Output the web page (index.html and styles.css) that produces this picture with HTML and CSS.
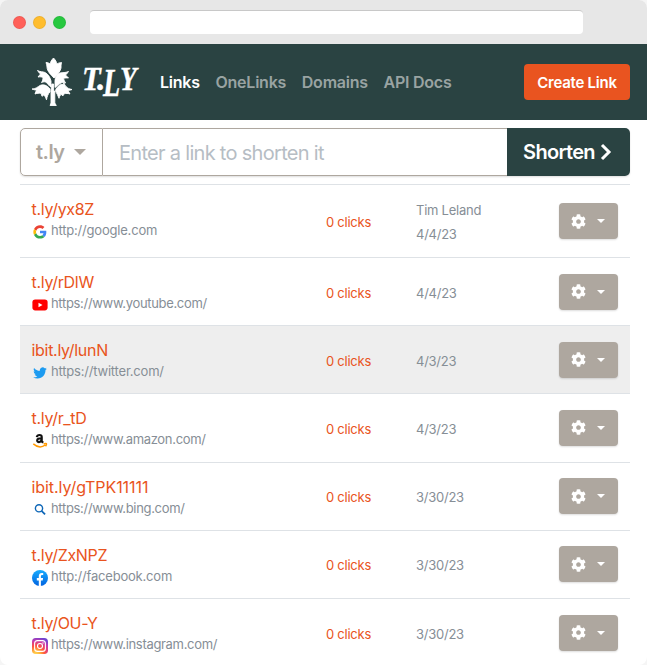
FILE: index.html
```html
<!DOCTYPE html>
<html lang="en">
<head>
<meta charset="utf-8">
<title>T.LY Links</title>
<link rel="stylesheet" href="styles.css">
</head>
<body>
<svg class="defs" aria-hidden="true">
  <symbol id="gear" viewBox="0 0 512 512"><path fill="currentColor" d="M487.4 315.7l-42.6-24.6c4.3-23.2 4.3-47 0-70.2l42.6-24.6c4.9-2.8 7.1-8.6 5.5-14-11.1-35.6-30-67.8-54.7-94.6-3.8-4.1-10-5.1-14.8-2.3L380.800 110c-17.900-15.400-38.500-27.300-60.800-35.100V25.800c0-5.600-3.900-10.500-9.400-11.700-36.700-8.200-74.300-7.800-109.200 0-5.500 1.200-9.400 6.100-9.400 11.700V75c-22.200 7.900-42.800 19.800-60.800 35.100L88.700 85.500c-4.900-2.800-11-1.900-14.800 2.300-24.700 26.700-43.600 58.900-54.700 94.600-1.700 5.400.6 11.200 5.500 14L67.300 221c-4.300 23.200-4.300 47 0 70.200l-42.600 24.600c-4.900 2.800-7.100 8.600-5.500 14 11.100 35.600 30 67.800 54.700 94.600 3.800 4.100 10 5.100 14.800 2.300l42.600-24.600c17.900 15.400 38.500 27.300 60.800 35.100v49.200c0 5.600 3.900 10.500 9.400 11.700 36.700 8.200 74.300 7.800 109.200 0 5.500-1.200 9.400-6.100 9.400-11.700v-49.200c22.200-7.900 42.800-19.800 60.800-35.100l42.600 24.600c4.900 2.800 11 1.900 14.800-2.300 24.700-26.700 43.600-58.900 54.700-94.600 1.500-5.500-.7-11.300-5.600-14.100zM256 336c-44.100 0-80-35.900-80-80s35.900-80 80-80 80 35.900 80 80-35.900 80-80 80z"/></symbol>
</svg>
<div class="window">
  <div class="chrome"><i class="dot red"></i><i class="dot yellow"></i><i class="dot green"></i><div class="address"></div></div>
  <header class="navbar">
    <svg class="tree" viewBox="0 0 42 50"><g fill="#fff" stroke="#fff" stroke-width=".9" stroke-linejoin="round">
      <path d="M22.500 1c2 2 3 4 3.500 6 1.500-1 3-1.500 4.500-1.500C30 7 30 9 30 11c-.5 3-3 6-7 10-3-3-7-7-7-11 0-1.500-.5-3-1-4.500 1.500 0 3 .5 4 1.500C19.500 5 20.500 3 22.500 1z"/>
      <path d="M20 24c-1-4-3-7-6-8.500-2-1-5-.5-7.500-2C8 15.500 8.500 16.500 9.500 17L7 20c2-.3 4-.2 5 .5 0 2-.5 3.500-1.500 5 2-1 4-1 5.500.5 1 1 2 3 4 4z"/>
      <path d="M24 24c0-4 2-7 5-8 3-.7 5 0 8.500-1.500C36 16.500 35.500 17.500 34.500 18l3 3c-2-.3-4 0-5 .5.5 1.500 1 3 2 4.500-2-.8-4-.5-5.500.5-2 1-3 3-5 4z"/>
      <path d="M19 32c-3-4-7-5-10-3.500-2 1-4 3.500-8 3.500 2 .8 3 1 4.500 1L4 37c2-.8 4-1 6-.7l1 3 2-1.500c1 1.500 2 3 2.500 5 .5-3 1.500-6 3.500-8z"/>
      <path d="M25 32c2-3 4-5 7-4.500L33 26c.5 1.500 1 2.500 2 3.500 1.500 1.500 3 2.500 6 3-2 .8-3 1-4 1l2 3.500c-2-.7-4-.7-6-.2l-1 2-2-1.500c-1 1.500-1.800 2.500-2 4-1-2.500-2-5-3.500-7z"/>
      <path d="M20.800 27h1.800v6l1.200 2v11l1.500 2.500h-6.200L20 46V34z"/></g>
    </svg>
    <span class="wordmark"><span class="tee">T</span><span class="period">.</span><span class="ell">L</span><span class="wye">Y</span></span>
    <nav><a class="active">Links</a><a>OneLinks</a><a>Domains</a><a>API Docs</a></nav>
    <button class="create"><span>Create Link</span></button>
  </header>
  <main>
    <div class="shortener">
      <button class="domain"><span>t.ly</span><i class="caret big"></i></button>
      <div class="field"><span>Enter a link to shorten it</span></div>
      <button class="shorten"><span>Shorten</span><svg viewBox="0 0 12 18"><path d="M2 2l7 7-7 7" fill="none" stroke="currentColor" stroke-width="3"/></svg></button>
    </div>
    <section class="links">
      <article class="row first">
        <div class="link"><a>t.ly/yx8Z</a><p><svg viewBox="0 0 48 48"><g transform="translate(4 4) scale(.83)"><path fill="#ea4335" d="M24 9.500c3.540 0 6.710 1.220 9.210 3.600l6.850-6.850C35.900 2.380 30.470 0 24 0 14.620 0 6.510 5.380 2.560 13.220l7.980 6.190C12.430 13.720 17.740 9.500 24 9.500z"/><path fill="#4285f4" d="M46.980 24.550c0-1.570-.15-3.090-.38-4.550H24v9.020h12.940c-.58 2.960-2.260 5.480-4.780 7.180l7.730 6c4.510-4.180 7.090-10.360 7.090-17.650z"/><path fill="#fbbc05" d="M10.530 28.590c-.48-1.450-.76-2.990-.76-4.590s.27-3.140.76-4.590l-7.980-6.190C.92 16.460 0 20.120 0 24s.92 7.540 2.560 10.780z"/><path fill="#34a853" d="M24 48c6.480 0 11.930-2.130 15.890-5.810l-7.730-6c-2.150 1.450-4.920 2.300-8.160 2.300-6.260 0-11.570-4.220-13.470-9.910l-7.980 6.190C6.510 42.620 14.620 48 24 48z"/></g></svg><span>http://google.com</span></p></div>
        <span class="clicks">0 clicks</span><div class="meta"><span>Tim Leland</span><span>4/4/23</span></div><button class="menu"><svg><use href="#gear"/></svg><i class="caret"></i></button>
      </article>
      <article class="row">
        <div class="link"><a>t.ly/rDlW</a><p class="www"><svg viewBox="0 0 16 16"><rect x=".4" y="2.600" width="15.200" height="10.800" rx="2.800" fill="#f00"/><path fill="#fff" d="M6.500 5.700v4.600l4-2.300z"/></svg><span>https://www.youtube.com/</span></p></div>
        <span class="clicks">0 clicks</span><div class="meta"><span>4/4/23</span></div><button class="menu"><svg><use href="#gear"/></svg><i class="caret"></i></button>
      </article>
      <article class="row hovered">
        <div class="link"><a>ibit.ly/lunN</a><p><svg viewBox="-2 -2 28 28"><path fill="#1d9bf0" d="M23.950 4.570a10 10 0 0 1-2.820.77 4.960 4.960 0 0 0 2.160-2.720c-.95.55-2 .95-3.130 1.180a4.920 4.920 0 0 0-8.380 4.480C7.690 8.090 4.070 6.130 1.640 3.160a4.820 4.820 0 0 0-.67 2.480c0 1.710.87 3.210 2.190 4.100a4.900 4.900 0 0 1-2.230-.62v.06a4.920 4.920 0 0 0 3.950 4.830 5 5 0 0 1-2.210.08 4.940 4.940 0 0 0 4.600 3.420A9.870 9.870 0 0 1 0 19.540a13.990 13.990 0 0 0 7.560 2.210c9.050 0 14-7.500 14-13.980 0-.21 0-.42-.02-.63a9.940 9.940 0 0 0 2.410-2.570z"/></svg><span>https://twitter.com/</span></p></div>
        <span class="clicks">0 clicks</span><div class="meta"><span>4/3/23</span></div><button class="menu"><svg><use href="#gear"/></svg><i class="caret"></i></button>
      </article>
      <article class="row">
        <div class="link"><a>t.ly/r_tD</a><p class="www"><svg viewBox="0 0 16 16"><path fill="none" stroke="#111" stroke-width="2.200" d="M4.800 4.100Q5.200 2 7.500 2T9.700 4.200v3.900l1.400 1.700M9.700 5.300C6.700 5.100 5.200 5.800 5.200 7.500c0 2.500 4.500 2.100 4.500-1.700"/><path fill="none" stroke="#f90" stroke-width="1.500" d="M1.300 10.900c4 3.500 8.700 3.600 12 1.100M11.500 10.900q3-.8 3 .1t-1 2.300"/></svg><span>https://www.amazon.com/</span></p></div>
        <span class="clicks">0 clicks</span><div class="meta"><span>4/3/23</span></div><button class="menu"><svg><use href="#gear"/></svg><i class="caret"></i></button>
      </article>
      <article class="row">
        <div class="link"><a class="wide">ibit.ly/gTPK11111</a><p class="www"><svg viewBox="0 0 16 16"><circle cx="7" cy="6.300" r="3.600" fill="none" stroke="#0d66b7" stroke-width="1.400"/><path stroke="#0d66b7" stroke-width="1.700" d="M9.500 8.800l3.600 3.600"/></svg><span>https://www.bing.com/</span></p></div>
        <span class="clicks">0 clicks</span><div class="meta"><span>3/30/23</span></div><button class="menu"><svg><use href="#gear"/></svg><i class="caret"></i></button>
      </article>
      <article class="row">
        <div class="link"><a>t.ly/ZxNPZ</a><p><svg viewBox="0 0 16 16"><defs><linearGradient id="fb" x2="0" y2="1"><stop stop-color="#18acfe"/><stop offset="1" stop-color="#0163e0"/></linearGradient></defs><circle cx="8" cy="8" r="8" fill="url(#fb)"/><path fill="#fff" d="M6.800 16v-5.500h-2V8h2V6.300c0-2.100 1.100-3.300 3.100-3.300.7 0 1.300.1 1.300.1v2h-1c-1 0-1.300.6-1.300 1.300V8h2.200l-.4 2.500H8.900V16z"/></svg><span>http://facebook.com</span></p></div>
        <span class="clicks">0 clicks</span><div class="meta"><span>3/30/23</span></div><button class="menu"><svg><use href="#gear"/></svg><i class="caret"></i></button>
      </article>
      <article class="row">
        <div class="link"><a>t.ly/OU-Y</a><p class="www"><svg viewBox="0 0 16 16"><defs><radialGradient id="ig" cx=".25" cy="1.050" r="1.100"><stop stop-color="#ffdd55"/><stop offset=".25" stop-color="#ffb13b"/><stop offset=".5" stop-color="#ff543e"/><stop offset=".8" stop-color="#c837ab"/><stop offset="1" stop-color="#7045d0"/></radialGradient></defs><rect width="16" height="16" rx="3.800" fill="url(#ig)"/><g fill="none" stroke="#fff" stroke-width="1.100"><rect x="2.600" y="2.600" width="10.800" height="10.800" rx="3"/><circle cx="8" cy="8" r="2.500"/></g><circle cx="11" cy="5" r=".7" fill="#fff"/></svg><span>https://www.instagram.com/</span></p></div>
        <span class="clicks">0 clicks</span><div class="meta"><span>3/30/23</span></div><button class="menu"><svg><use href="#gear"/></svg><i class="caret"></i></button>
      </article>
    </section>
  </main>
</div>
</body>
</html>
```
FILE: styles.css
```css
* { box-sizing: border-box; }
body { margin: 0; background: #f5f5f5; font-family: Inter, "Liberation Sans", sans-serif; }
button { border: 0; padding: 0; font: inherit; }
.defs { display: none; }
.window { height: 665px; overflow: hidden; border-radius: 8px; background: #fff; }
.chrome { height: 44px; display: flex; align-items: center; gap: 7px; padding-left: 13px; background: #e7e7e7; }
.dot { width: 13px; height: 13px; border-radius: 50%; border: 1px solid #0001; }
.red { background: #ff6059; }
.yellow { background: #ffbd2e; }
.green { background: #27c840; }
.address { width: 493px; height: 24px; margin-left: 17px; border-radius: 4px; background: #fff; border-top: 1px solid #c8c8c8; }
.navbar { height: 76px; display: flex; align-items: center; padding: 0 17px 0 31px; background: #2a4342; color: #fff; }
.tree { width: 42px; height: 50px; }
.wordmark { width: 57px; height: 38px; margin: -7px 0 0 9px; display: flex; font: italic bold 34px/38px "Liberation Serif", serif; -webkit-text-stroke: .4px #fff; }
.wordmark span { display: block; flex: none; transform-origin: left; }
.tee { width: 15px; transform: scaleX(.9); }
.period { width: 6px; }
.ell { width: 17px; padding-top: 4px; font-size: 39px; transform: scaleX(.72); }
.wye { width: 19px; transform: scaleX(.8); }
nav { display: flex; gap: 15.7px; margin-left: 21px; font-size: 16px; font-weight: 600; letter-spacing: -.23px; color: #99a3a2; white-space: nowrap; }
nav .active { color: #fff; }
.create { width: 106px; height: 36px; margin-left: auto; border-radius: 4px; background: #e95420; color: #fff; font-size: 15px; font-weight: 600; letter-spacing: -.25px; }
main { padding: 8px 17px 0 20px; }
.shortener { height: 48px; display: flex; margin-bottom: 8px; border-radius: 5px; box-shadow: 0 1px 2px #0002; }
.domain { width: 83px; display: flex; align-items: center; gap: 9px; padding-left: 15px; background: #fff; border: 1px solid #aea79f; border-radius: 5px 0 0 5px; color: #aea79f; font-size: 20px; font-weight: 600; letter-spacing: -.5px; }
.caret { width: 0; border: 4px solid transparent; border-top-color: currentColor; border-bottom: 0; }
.caret.big { border-width: 6px; border-bottom: 0; }
.field { flex: 1; display: flex; align-items: center; padding-left: 16px; border: solid #aea79f; border-width: 1px 0; color: #b6bdc4; font-size: 20px; letter-spacing: -.7px; padding-top: 2px; }
.shorten { width: 123px; display: flex; align-items: center; justify-content: center; gap: 5px; padding-right: 2px; border-radius: 0 5px 5px 0; background: #2a4342; color: #fff; font-size: 20px; font-weight: 600; letter-spacing: -.7px; }
.shorten svg { width: 12px; height: 18px; }
.row { height: 68.2px; display: grid; grid-template-columns: 295px 90px 143px 59px; align-items: center; padding: 0 11px; border-top: 1px solid #dee2e6; }
.row.first { height: 73px; }
.hovered { background: #eee; }
.link { align-self: start; padding-top: 12px; }
.link a { display: block; margin-left: .5px; font-size: 16px; line-height: 24px; color: #e95420; letter-spacing: -.3px; }
.link .wide { letter-spacing: -.07px; }
.link p { display: flex; align-items: center; gap: 3px; margin: 0 0 0 1px; height: 19px; color: #868e96; font-size: 13px; line-height: 19px; letter-spacing: -.2px; }
.link .www { letter-spacing: -.32px; }
.link p svg { width: 16px; height: 16px; margin-top: 3px; }
.clicks { padding-top: 2px; color: #e95420; font-size: 13px; letter-spacing: -.25px; }
.meta { display: grid; padding-top: 2px; color: #868e96; font-size: 13px; line-height: 24px; letter-spacing: -.25px; }
.menu { width: 59px; height: 36px; display: flex; align-items: center; justify-content: center; gap: 11px; padding-right: 2px; border-radius: 4px; background: #aea79f; color: #fff; box-shadow: 0 1px 2px #0002; }
.menu svg { width: 15px; height: 15px; }
```
